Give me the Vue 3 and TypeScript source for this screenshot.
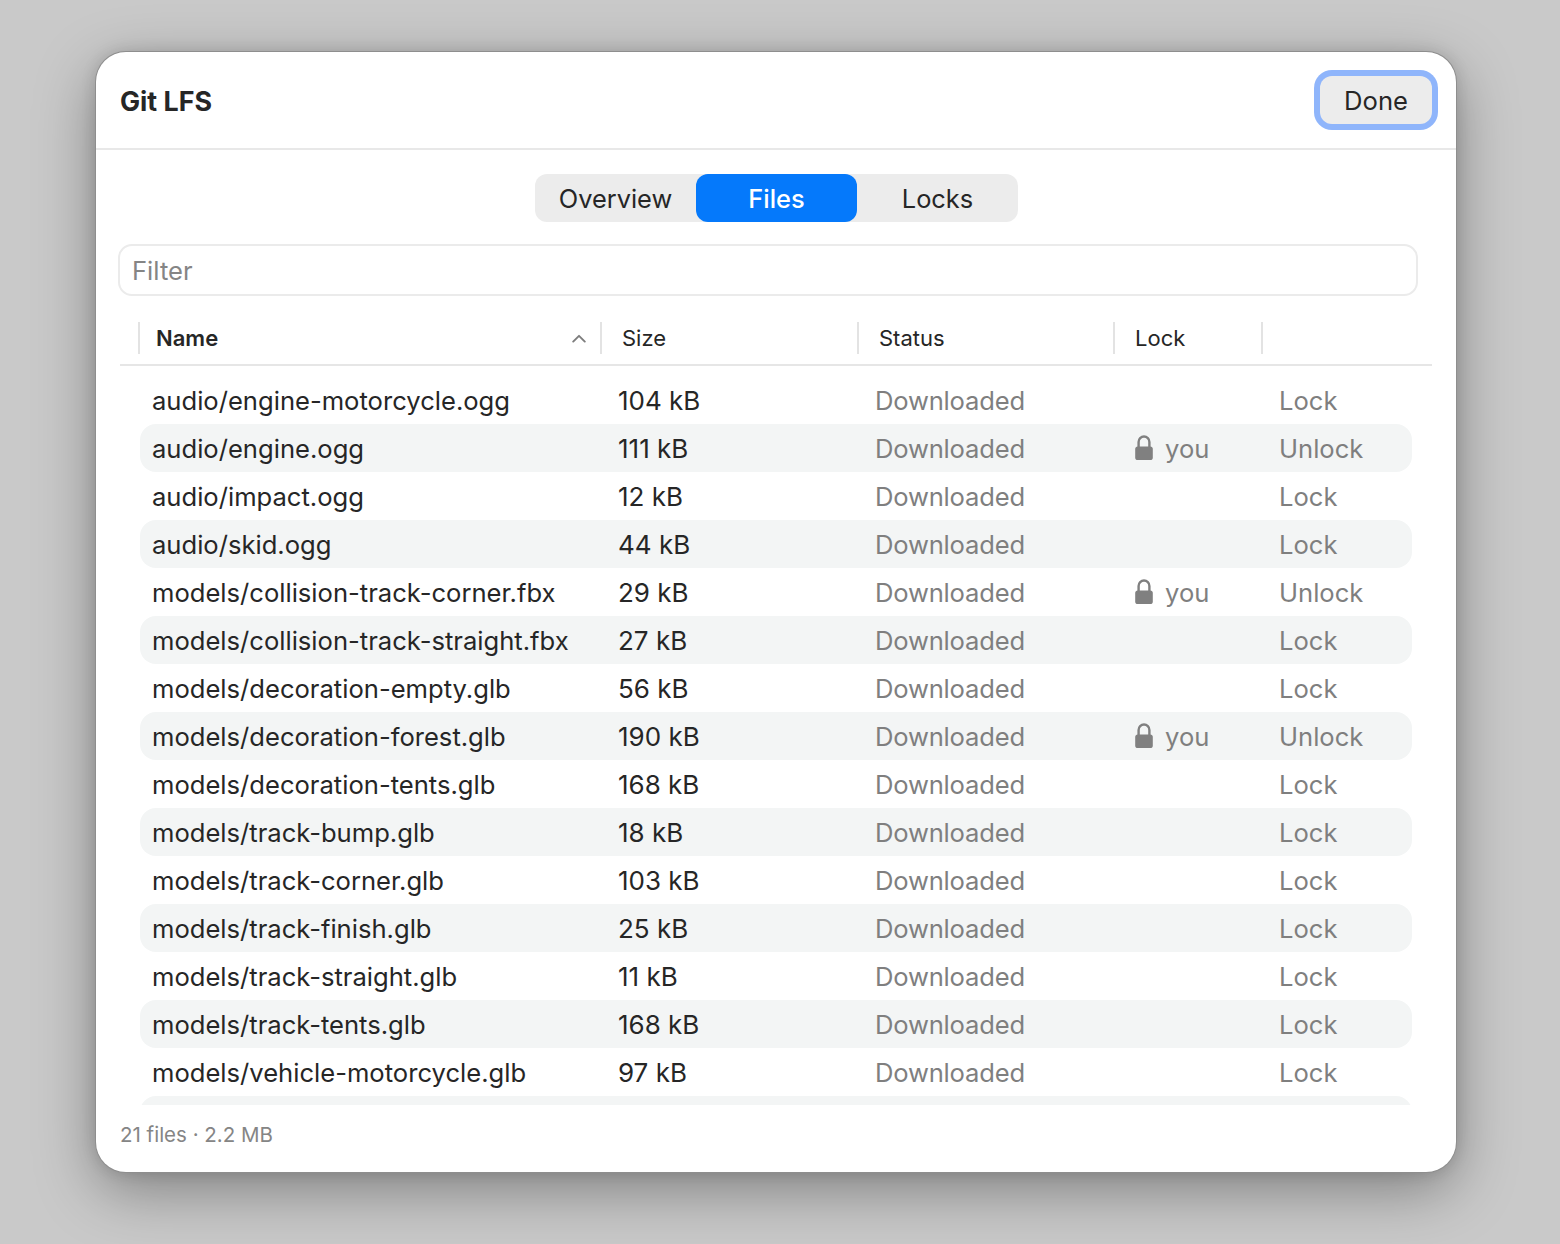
<script setup lang="ts">
import { ref } from 'vue'

interface FileRow { name: string; size: string; status: string; locked: boolean }

const tabs: string[] = ['Overview', 'Files', 'Locks']
const activeTab = ref<string>('Files')

const files: FileRow[] = [
  { name: 'audio/engine-motorcycle.ogg', size: '104 kB', status: 'Downloaded', locked: false },
  { name: 'audio/engine.ogg', size: '111 kB', status: 'Downloaded', locked: true },
  { name: 'audio/impact.ogg', size: '12 kB', status: 'Downloaded', locked: false },
  { name: 'audio/skid.ogg', size: '44 kB', status: 'Downloaded', locked: false },
  { name: 'models/collision-track-corner.fbx', size: '29 kB', status: 'Downloaded', locked: true },
  { name: 'models/collision-track-straight.fbx', size: '27 kB', status: 'Downloaded', locked: false },
  { name: 'models/decoration-empty.glb', size: '56 kB', status: 'Downloaded', locked: false },
  { name: 'models/decoration-forest.glb', size: '190 kB', status: 'Downloaded', locked: true },
  { name: 'models/decoration-tents.glb', size: '168 kB', status: 'Downloaded', locked: false },
  { name: 'models/track-bump.glb', size: '18 kB', status: 'Downloaded', locked: false },
  { name: 'models/track-corner.glb', size: '103 kB', status: 'Downloaded', locked: false },
  { name: 'models/track-finish.glb', size: '25 kB', status: 'Downloaded', locked: false },
  { name: 'models/track-straight.glb', size: '11 kB', status: 'Downloaded', locked: false },
  { name: 'models/track-tents.glb', size: '168 kB', status: 'Downloaded', locked: false },
  { name: 'models/vehicle-motorcycle.glb', size: '97 kB', status: 'Downloaded', locked: false },
  { name: '', size: '', status: '', locked: false } // only the top of this row shows above the footer
]
</script>

<template>
  <div class="page">
    <div class="dialog">
      <header class="head">
        <h1 class="title">Git LFS</h1>
        <button class="done">Done</button>
      </header>

      <div class="tabs-wrap">
        <div class="tabs">
          <div v-for="t in tabs" :key="t" class="tab" :class="{ on: t === activeTab }" @click="activeTab = t">{{ t }}</div>
        </div>
      </div>

      <div class="filter-wrap">
        <input class="filter" placeholder="Filter" />
      </div>

      <div class="thead">
        <div class="th th-name">
          <span>Name</span>
          <svg class="sort" width="14" height="9" viewBox="0 0 14 9" fill="none">
            <path d="M1.2 7.6 7 1.8l5.8 5.8" stroke="#7d7d7d" stroke-width="1.9" stroke-linecap="round" stroke-linejoin="round" />
          </svg>
        </div>
        <div class="th th-size">Size</div>
        <div class="th th-status">Status</div>
        <div class="th th-lock">Lock</div>
        <div class="th th-action"></div>
      </div>

      <div class="tbody">
        <div v-for="(f, i) in files" :key="i" class="row">
          <div class="c-name">{{ f.name }}</div>
          <div class="c-size">{{ f.size }}</div>
          <div class="c-status">{{ f.status }}</div>
          <div class="c-lock">
            <template v-if="f.locked">
              <svg width="18" height="26" viewBox="0 0 18 26" fill="none">
                <path d="M3.6 13V6.9a5.4 5.4 0 0 1 10.8 0V13" stroke="#808080" stroke-width="2.4" />
                <rect x="0.2" y="11.4" width="17.6" height="13.6" rx="2.6" fill="#808080" />
              </svg>
              <span>you</span>
            </template>
          </div>
          <div class="c-action">{{ f.name ? (f.locked ? 'Unlock' : 'Lock') : '' }}</div>
        </div>
      </div>

      <footer class="foot">21 files · 2.2 MB</footer>
    </div>
  </div>
</template>

<style>
html, body {
  margin: 0;
  background: #c9c9c9;
}
</style>

<style scoped>
.page {
  box-sizing: border-box;
  width: 1560px;
  height: 1244px;
  padding: 52px 104px 72px 96px;
  font-family: Inter, "Noto Sans", sans-serif;
  overflow: hidden;
}
.dialog {
  box-sizing: border-box;
  width: 1360px;
  height: 1120px;
  display: flex;
  flex-direction: column;
  background: #fff;
  border-radius: 30px;
  box-shadow: 0 0 0 1px #8e8e8e, 0 18px 60px rgba(0, 0, 0, 0.36), 0 0 16px rgba(0, 0, 0, 0.14);
  overflow: hidden;
}
.head {
  flex: none;
  box-sizing: border-box;
  height: 98px;
  display: flex;
  align-items: center;
  justify-content: space-between;
  padding: 0 24px;
  border-bottom: 2px solid #e8e8e8;
}
.title {
  margin: 1px 0 0;
  font-size: 26.8px;
  font-weight: 700;
  color: #262626;
}
.done {
  width: 112px;
  height: 48px;
  border: 0;
  border-radius: 12px;
  background: #ececec;
  font: 400 25.6px Inter, "Noto Sans", sans-serif;
  color: #262626;
  box-shadow: 0 0 0 6px #8fb5fb;
  padding: 0;
}
.tabs-wrap {
  flex: none;
  display: flex;
  justify-content: center;
  padding: 24px 0 22px;
  padding-left: 1px;
}
.tabs {
  display: flex;
  width: 483px;
  height: 48px;
  background: #ececec;
  border-radius: 12px;
}
.tab {
  flex: 1;
  display: flex;
  align-items: center;
  justify-content: center;
  border-radius: 12px;
  font-size: 25.4px;
  color: #262626;
}
.tab.on {
  background: #0579fb;
  color: #fff;
  font-weight: 500;
}
.filter-wrap {
  flex: none;
  padding: 0 38px 0 22px;
}
.filter {
  box-sizing: border-box;
  display: block;
  width: 100%;
  height: 52px;
  border: 2px solid #ebebeb;
  border-radius: 14px;
  outline: none;
  padding: 0 12px;
  font: 400 25.6px Inter, "Noto Sans", sans-serif;
  color: #262626;
}
.filter::placeholder {
  color: #858585;
  opacity: 1;
}
.thead {
  flex: none;
  box-sizing: border-box;
  display: flex;
  height: 44px;
  margin: 26px 24px 0;
  padding: 0 0 10px 18px;
  border-bottom: 2px solid #e6e6e6;
  font-size: 22px;
  color: #262626;
}
.th {
  box-sizing: border-box;
  display: flex;
  align-items: center;
  border-left: 2px solid #e3e3e3;
  padding-left: 20px;
}
.th-name {
  width: 462px;
  justify-content: space-between;
  padding-left: 16px;
  padding-right: 14px;
  font-weight: 600;
}
.th-size { width: 257px; }
.th-status { width: 256px; }
.th-lock { width: 148px; }
.th-action { width: 20px; }
.tbody {
  flex: none;
  height: 739px;
  overflow: hidden;
  padding: 10px 44px 0 44px;
  box-sizing: border-box;
}
.row {
  display: flex;
  align-items: center;
  height: 48px;
  padding-left: 12px;
  border-radius: 16px;
  font-size: 25.6px;
  color: #262626;
}
.row:nth-child(even) {
  background: #f3f5f5;
}
.c-name { width: 466px; white-space: nowrap; }
.c-size { width: 257px; font-size: 26px; }
.c-status { width: 256px; color: #7f7f7f; letter-spacing: -0.2px; }
.c-lock {
  width: 148px;
  display: flex;
  align-items: center;
  gap: 12px;
  padding-left: 4px;
  box-sizing: border-box;
  color: #7f7f7f;
}
.c-action { color: #7f7f7f; }
.foot {
  flex: none;
  padding: 17px 24px 0;
  font-size: 20.5px;
  color: #858585;
}
</style>
